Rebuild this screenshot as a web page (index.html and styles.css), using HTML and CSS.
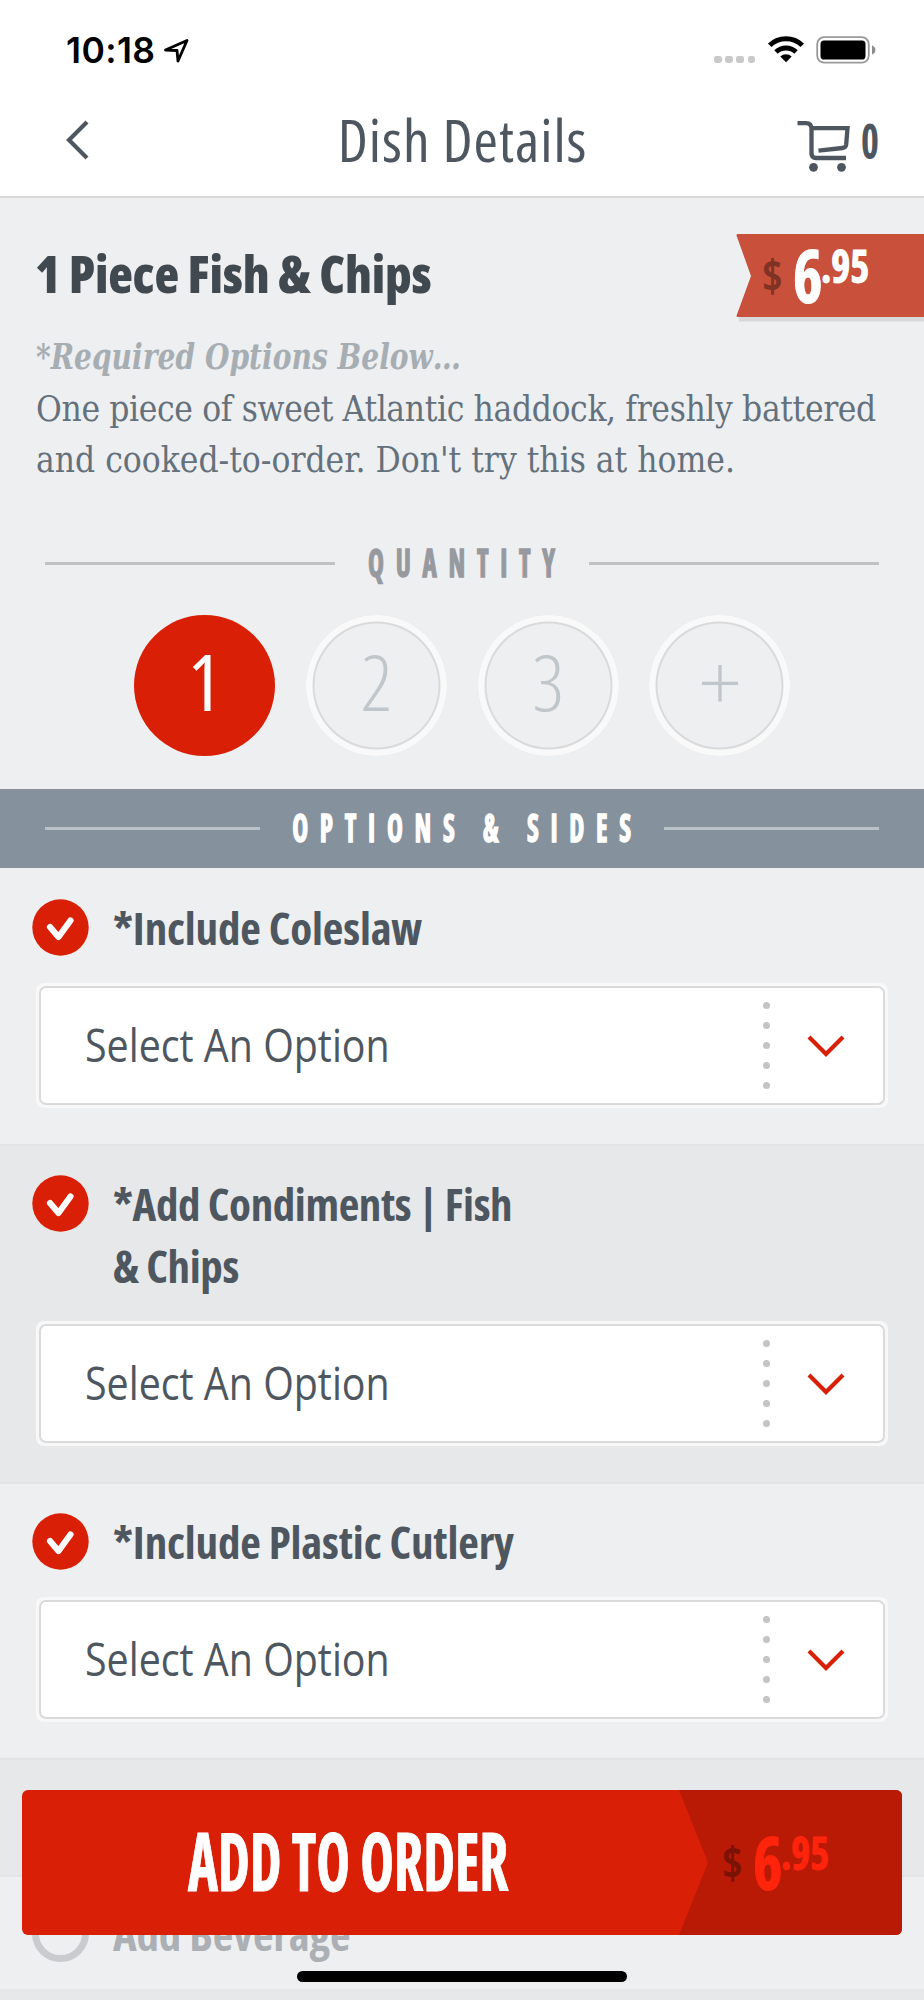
FILE: index.html
```html
<!DOCTYPE html>
<html lang="en">
<head>
<meta charset="utf-8">
<title>Dish Details</title>
<link rel="stylesheet" href="styles.css">
</head>
<body>
<header class="header">
  <div class="status">
    <span class="time">10:18</span>
    <svg class="location" width="26" height="26" viewBox="0 0 26 26"><path d="M2.5 12 L24 2.5 L15 23 L14 12.5 Z" fill="none" stroke="#000" stroke-width="2.8" stroke-linejoin="round"/></svg>
    <div class="signal"><i></i><i></i><i></i><i></i></div>
    <svg class="wifi" width="38" height="28" viewBox="0 0 38 28">
      <g fill="none" stroke="#000" stroke-width="5"><path d="M2.7 9.3 A23.5 23.5 0 0 1 35.3 9.3"/><path d="M9 16 A14.5 14.5 0 0 1 29 16"/></g>
      <path d="M13.3 20.5 A8.3 8.3 0 0 1 24.7 20.5 L19 26.3 Z"/>
    </svg>
    <svg class="battery" width="60" height="28" viewBox="0 0 60 28"><rect x="1.2" y="1.2" width="51.6" height="25.4" rx="7" fill="#fff" stroke="#999" stroke-width="1.8"/><rect x="4.5" y="4.5" width="45" height="19" rx="3.6"/><path d="M56 9.5 Q59.4 10.8 59.4 14 Q59.4 17.2 56 18.5 Z" fill="#8c8c8c"/></svg>
  </div>
  <nav class="nav">
    <svg class="back" width="28" height="44" viewBox="0 0 28 44"><path d="M23 4 L5 22 L23 40" fill="none" stroke="#4e5760" stroke-width="4.2"/></svg>
    <h1 class="nav-title">Dish Details</h1>
    <div class="cart">
      <svg width="54" height="54" viewBox="0 0 54 54">
        <g fill="none" stroke="#4e5760" stroke-width="4.3"><path d="M.5 5.2 H9 Q14.5 5.2 14.5 11 V35.5 Q14.5 40 19 40 H49"/><path d="M14.5 10.2 H50.5 L49.2 26.5 Q48.8 29.6 45.5 30 L21.5 32.6"/></g>
        <g fill="#4e5760"><circle cx="16.5" cy="49.3" r="4.4"/><circle cx="44.5" cy="49.3" r="4.4"/></g>
      </svg>
      <span class="cart-count">0</span>
    </div>
  </nav>
</header>

<section class="hero">
  <div class="ribbon">
    <svg class="ribbon-bg" width="188" height="90" viewBox="0 0 188 90"><path d="M3 83 H188 V87.5 H3 Z" fill="#d6d8da"/><path d="M2 0 H188 V83 H2 Q0 83 .6 81.4 L15 42 L.6 1.8 Q0 0 2 0 Z" fill="#c9503a"/></svg>
    <div class="price"><span class="currency">$</span><span class="whole">6</span><span class="cents">.95</span></div>
  </div>
  <h2 class="dish">1 Piece Fish &amp; Chips</h2>
  <p class="required">*Required Options Below…</p>
  <p class="description"><span class="line-a">One piece of sweet Atlantic haddock, freshly battered</span><br><span class="line-b">and cooked-to-order. Don't try this at home.</span></p>
  <div class="divider quantity-title"><hr><span class="spaced">QUANTITY</span><hr></div>
  <div class="quantities">
    <button class="qty selected">1</button>
    <button class="qty">2</button>
    <button class="qty">3</button>
    <button class="qty plus">+</button>
  </div>
</section>

<div class="divider band"><hr><span class="spaced">OPTIONS &amp; SIDES</span><hr></div>

<main>
  <section class="option first">
    <div class="option-head">
      <svg class="check" width="57" height="57" viewBox="0 0 57 57"><circle cx="28.5" cy="28.5" r="28.2" fill="#d91f06"/><path d="M18 28 L26.5 38 L38.5 21.5" fill="none" stroke="#fff" stroke-width="6.2" stroke-linecap="round" stroke-linejoin="round"/></svg>
      <h3 class="label">*Include Coleslaw</h3>
    </div>
    <div class="select"><span class="value"><span>Select An Option</span></span><span class="dots"><i></i><i></i><i></i><i></i><i></i></span><svg width="40" height="26" viewBox="0 0 40 26"><path d="M3 4 L20 21 L37 4" fill="none" stroke="#d91f06" stroke-width="4.2"/></svg></div>
  </section>
  <section class="option alt">
    <div class="option-head">
      <svg class="check" width="57" height="57" viewBox="0 0 57 57"><circle cx="28.5" cy="28.5" r="28.2" fill="#d91f06"/><path d="M18 28 L26.5 38 L38.5 21.5" fill="none" stroke="#fff" stroke-width="6.2" stroke-linecap="round" stroke-linejoin="round"/></svg>
      <h3 class="label">*Add Condiments | Fish &amp; Chips</h3>
    </div>
    <div class="select"><span class="value"><span>Select An Option</span></span><span class="dots"><i></i><i></i><i></i><i></i><i></i></span><svg width="40" height="26" viewBox="0 0 40 26"><path d="M3 4 L20 21 L37 4" fill="none" stroke="#d91f06" stroke-width="4.2"/></svg></div>
  </section>
  <section class="option">
    <div class="option-head">
      <svg class="check" width="57" height="57" viewBox="0 0 57 57"><circle cx="28.5" cy="28.5" r="28.2" fill="#d91f06"/><path d="M18 28 L26.5 38 L38.5 21.5" fill="none" stroke="#fff" stroke-width="6.2" stroke-linecap="round" stroke-linejoin="round"/></svg>
      <h3 class="label">*Include Plastic Cutlery</h3>
    </div>
    <div class="select"><span class="value"><span>Select An Option</span></span><span class="dots"><i></i><i></i><i></i><i></i><i></i></span><svg width="40" height="26" viewBox="0 0 40 26"><path d="M3 4 L20 21 L37 4" fill="none" stroke="#d91f06" stroke-width="4.2"/></svg></div>
  </section>
  <section class="option alt collapsed"></section>
  <section class="option last">
    <div class="option-head">
      <span class="check empty"></span>
      <h3 class="label muted">Add Beverage</h3>
    </div>
  </section>
</main>

<button class="order">
  <span class="order-label">ADD TO ORDER</span>
  <span class="order-price"><span class="price"><span class="currency">$</span><span class="whole">6</span><span class="cents">.95</span></span></span>
</button>
<div class="home-bar"></div>
</body>
</html>
```
FILE: styles.css
```css
* { box-sizing: border-box; }

body {
  margin: 0;
  position: relative;
  width: 924px;
  height: 2000px;
  overflow: hidden;
  background: #e7e8ea;
  color: #4e5760;
  font-family: "Open Sans", sans-serif;
  font-stretch: 75%;
}

h1, h2, h3, p { margin: 0; }
button { border: 0; padding: 0; font: inherit; }
svg { display: block; flex: none; }

/* Header */
.header {
  height: 198px;
  background: #fff;
  border-bottom: 2px solid #d9d9d9;
}

.status {
  height: 100px;
  display: flex;
  align-items: center;
  padding-left: 66px;
}
.time {
  width: 97px;
  padding-top: 2px;
  font: 600 35.5px/100px Inter, sans-serif;
  color: #000;
  letter-spacing: .4px;
}
.location { margin-top: 1px; }
.signal {
  display: flex;
  gap: 3.6px;
  margin: 19px 12px 0 525px;
}
.signal i {
  width: 7.6px;
  height: 7.6px;
  border-radius: 2.4px;
  background: #c9c9c9;
}
.battery { margin-left: 11px; }

.nav {
  display: flex;
  align-items: center;
  height: 80px;
  padding: 0 40px 0 64px;
}
.nav-title {
  flex: 1;
  padding-left: 36px;
  text-align: center;
  font-size: 59px;
  font-weight: 400;
  line-height: 76px;
  letter-spacing: 1px;
  margin-top: -3px;
}
.cart {
  display: flex;
  align-items: center;
  gap: 10px;
  width: 87px;
}
.cart svg { margin-top: 9px; }
.cart-count {
  font-size: 49px;
  font-weight: 700;
  line-height: 80px;
  transform: scaleX(.78);
  transform-origin: left;
}

/* Dish summary */
.hero {
  position: relative;
  height: 591px;
  padding: 45px 36px 0;
  background: #eeeff1;
}
.ribbon {
  position: absolute;
  top: 36px;
  right: 0;
  width: 188px;
  height: 83px;
}
.ribbon-bg { position: absolute; top: 0; left: 0; }
.ribbon .price { padding-left: 26px; }

.price {
  position: relative;
  display: flex;
  align-items: flex-start;
  font-weight: 700;
  color: #fff;
}
.price span { transform-origin: left; }
.currency {
  width: 31px;
  font-size: 44px;
  line-height: 82px;
  color: #803225;
}
.whole {
  width: 28px;
  font-size: 73px;
  line-height: 82px;
  transform: scaleX(.86);
}
.cents {
  font-size: 47px;
  line-height: 63px;
  transform: scaleX(.86);
}
.whole, .cents { -webkit-text-stroke: 1px currentColor; }

.dish {
  margin-left: -1px;
  font-size: 51px;
  font-weight: 800;
  line-height: 61px;
  letter-spacing: -.25px;
  color: #404850;
}
.required {
  width: max-content;
  margin-top: 27px;
  font: italic 700 35px/52.5px "DejaVu Serif", serif;
  font-stretch: 75%;
  color: #a7aeb3;
  transform: scaleX(.893);
  transform-origin: left;
}
.description {
  font: 400 35px/51.5px "DejaVu Serif", serif;
  font-stretch: 75%;
  white-space: nowrap;
  color: #64717c;
}
.line-a { letter-spacing: -.36px; }
.line-b { letter-spacing: 0; }

.divider {
  display: flex;
  align-items: center;
  justify-content: space-between;
}
.divider hr {
  height: 2.5px;
  margin: 0;
  border: 0;
}
.spaced {
  width: max-content;
  font-size: 39px;
  font-weight: 700;
  letter-spacing: 17px;
  line-height: 50px;
  padding-bottom: 3px;
  transform: scaleX(.69);
  white-space: nowrap;
  -webkit-text-stroke: 1.4px currentColor;
}
.quantity-title {
  height: 56px;
  margin: 49px 9px 23px;
}
.quantity-title .spaced {
  margin: 0 -60px;
  padding-left: 17px;
  color: #97999f;
}
.quantity-title hr { width: 290px; background: #bfc1c2; }

.quantities {
  display: flex;
  gap: 30.8px;
  padding-left: 98px;
}
.qty {
  width: 141px;
  height: 141px;
  padding-bottom: 9px;
  border-radius: 50%;
  background: #eeeff1;
  box-shadow: inset 0 0 0 6.5px #f9f9f9, inset 0 0 0 8.5px #d9dadb;
  font-size: 78px;
  font-weight: 300;
  line-height: 132px;
  color: #bfc6cc;
}
.qty.selected {
  background: #d91f06;
  box-shadow: none;
  font-weight: 500;
  color: #fff;
}
.plus { font-stretch: 100%; }

.band {
  height: 79px;
  padding: 0 45px;
  background: #85929d;
}
.band .spaced {
  margin: 0 -80px;
  padding-left: 17px;
  color: #fff;
}
.band hr { width: 215px; background: #b9c2c9; }

/* Options */
.option {
  height: 276px;
  padding: 27px 36px 0;
  border-top: 2px solid #e3e4e6;
  background: #eeeff1;
}
.option.first { border-color: #eeeff1; }
.option.alt { background: #e7e8ea; height: 338px; }
.option.collapsed { height: 117px; }
.option.last { height: 114px; padding-top: 26px; }

.option-head {
  display: flex;
  align-items: flex-start;
  gap: 24px;
  margin-left: -4px;
}
.check { margin-top: 2px; }
.empty {
  flex: none;
  width: 57px;
  height: 57px;
  border: 7px solid #c9cccf;
  border-radius: 50%;
}
.label {
  width: 420px;
  font-size: 45px;
  font-weight: 700;
  line-height: 62px;
  letter-spacing: -.15px;
}
.alt .label { letter-spacing: -.4px; }
.muted { color: #acb0b5; }

.select {
  position: relative;
  isolation: isolate;
  display: flex;
  align-items: center;
  height: 125px;
  margin-top: 24px;
  padding: 0 42px 0 49px;
  border-radius: 8px;
  background: #f8f8f8;
}
.select::before {
  content: "";
  position: absolute;
  z-index: -1;
  inset: 3px;
  border: 2px solid #dadada;
  border-radius: 7px;
  background: #fff;
}
.value {
  flex: 1;
  padding-bottom: 3px;
}
.value span {
  display: inline-block;
  font-size: 45px;
  font-stretch: 100%;
  transform: scaleX(.875);
  transform-origin: left;
}
.dots {
  display: flex;
  flex-direction: column;
  gap: 13px;
  margin-right: 36px;
}
.dots i {
  width: 7px;
  height: 7px;
  border-radius: 50%;
  background: #c4c4c4;
}

/* Bottom action */
.order {
  position: absolute;
  top: 1790px;
  left: 22px;
  display: flex;
  width: 880px;
  height: 145px;
  overflow: hidden;
  border-radius: 6px;
  background: #d91f06;
  text-align: left;
}
.order-label {
  width: 657px;
  padding-left: 166px;
  font-size: 80px;
  font-weight: 700;
  line-height: 140px;
  color: #fff;
  white-space: nowrap;
  transform: scaleX(.712);
  transform-origin: 166px 50%;
  -webkit-text-stroke: 1px currentColor;
}
.order-price {
  flex: 1;
  padding: 31px 0 0 43px;
  background: #b91a06;
  clip-path: polygon(0 0, 100% 0, 100% 100%, 0 100%, 29px 50%);
}
.order-price .currency { color: #7a1205; }
.order-price .whole, .order-price .cents { color: #ff240b; }

.home-bar {
  position: absolute;
  top: 1971px;
  left: 297px;
  width: 330px;
  height: 11px;
  border-radius: 6px;
  background: #000;
}
```
